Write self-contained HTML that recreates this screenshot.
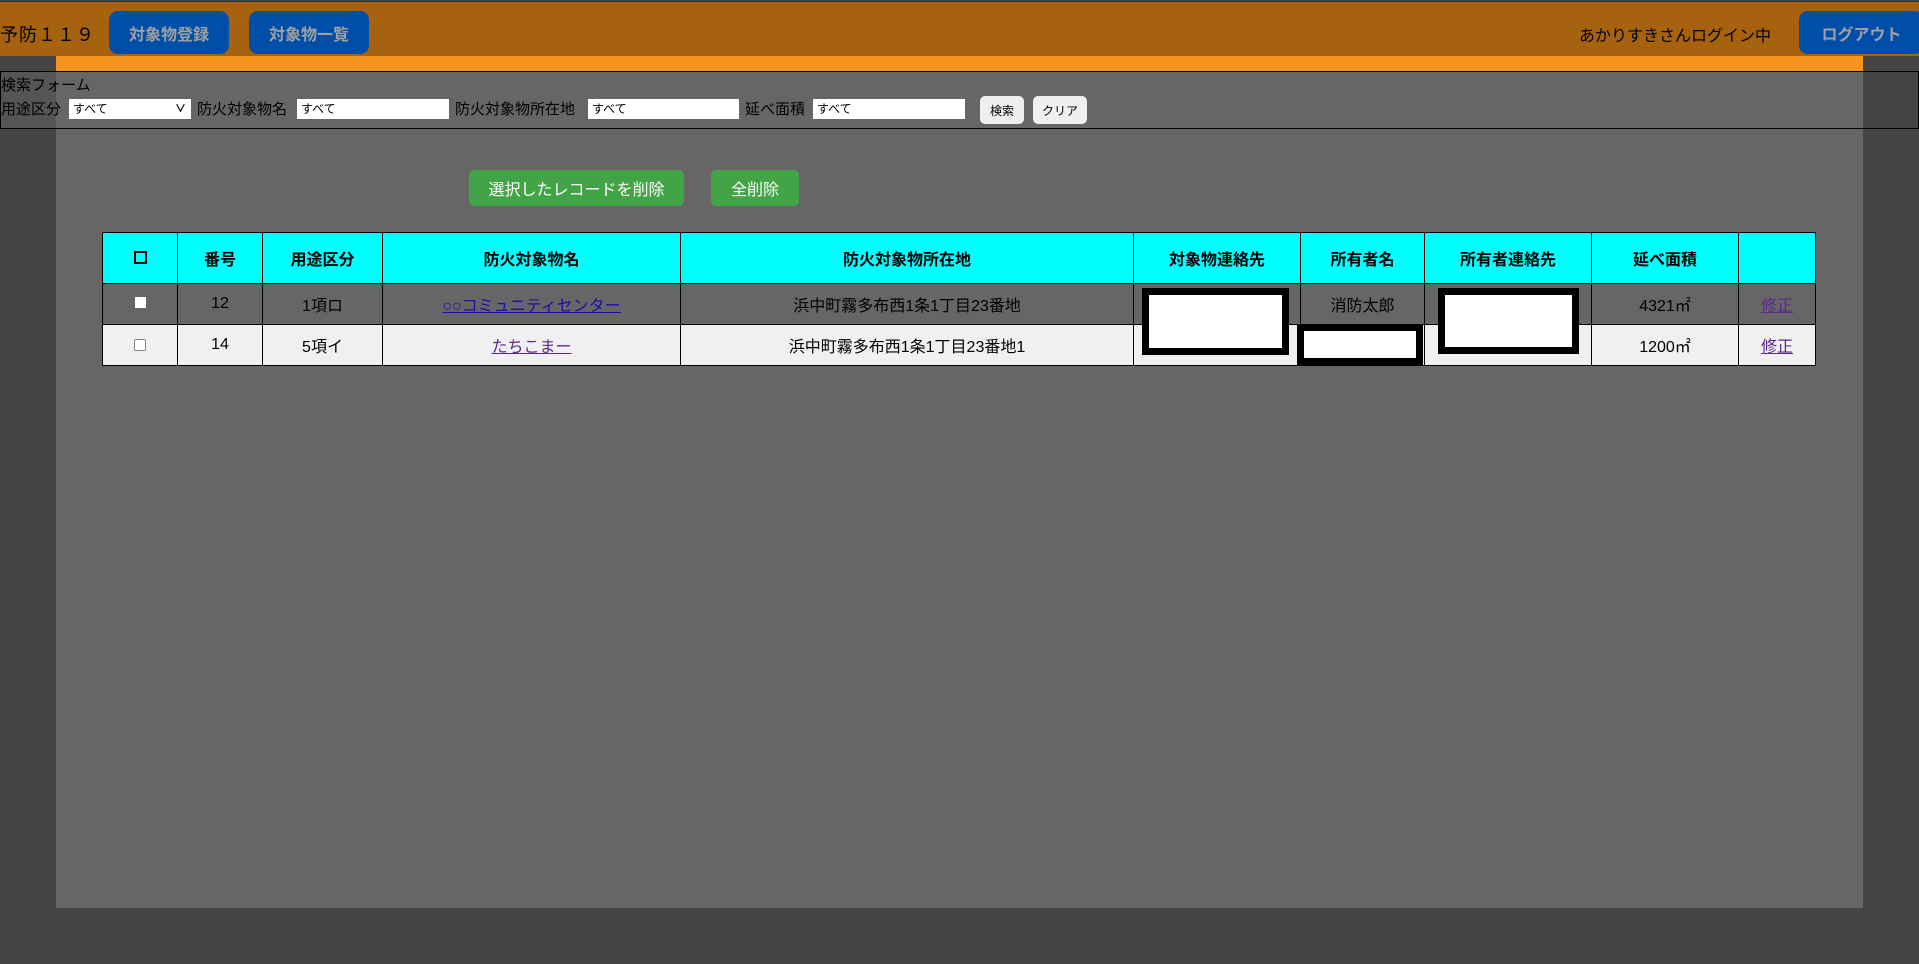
<!DOCTYPE html>
<html><head><meta charset="utf-8"><style>
*{margin:0;padding:0;box-sizing:border-box}
body{width:1919px;height:964px;background:#444;position:relative;overflow:hidden;font-family:"Liberation Sans","Noto Sans CJK JP",sans-serif;color:#000}
.abs{position:absolute}
#hdr{left:0;top:1px;width:1919px;height:55px;background:#a6620f;border-top:1px solid #333}
#inner{left:56px;top:56px;width:1807px;height:852px;background:#666}
#orange{left:56px;top:56px;width:1807px;height:15px;background:#f7941d}
.bb{background:#004ea8;color:#a0a0a0;font-weight:bold;font-size:16px;border-radius:9px;display:flex;align-items:center;justify-content:center;height:43px;top:11px}
#form{left:0;top:71px;width:1919px;height:58px;border:1px solid #000;font-size:15px}
#form .l{position:absolute;white-space:nowrap}
.inp{position:absolute;background:#fff;height:20px;top:27px;font-size:12px;padding-left:4px;line-height:20px}
.btn{position:absolute;background:#efefef;border-radius:5px;font-size:12px;display:flex;align-items:center;justify-content:center;top:24px;height:28px}
.gb{background:#43a447;color:#fff;font-size:16px;border-radius:5px;display:flex;align-items:center;justify-content:center;top:170px;height:36px}
table{position:absolute;left:102px;top:232px;border-collapse:collapse;font-size:16px;table-layout:fixed}
td,th{border:1px solid #000;text-align:center}
th{background:#0ff;height:51px;font-size:16px}
td{height:41px}
tr.r2 td{background:#f0f0f0}
a{color:#1a0dab}
a.v{color:#5a2a8a}
.red{position:absolute;background:#fff;border:7px solid #000}
</style></head><body>
<div class="abs" id="hdr"></div>
<div class="abs" style="left:0;top:21px;font-size:18px;letter-spacing:1px">予防１１９</div>
<div class="abs bb" style="left:109px;width:120px">対象物登録</div>
<div class="abs bb" style="left:249px;width:120px">対象物一覧</div>
<div class="abs" style="left:1579px;top:22px;font-size:16px">あかりすきさんログイン中</div>
<div class="abs bb" style="left:1799px;width:125px">ログアウト</div>
<div class="abs" id="inner"></div>
<div class="abs" id="orange"></div>
<div class="abs" style="left:0;top:71px;width:56px;height:58px;background:#555"></div>
<div class="abs" style="left:1863px;top:71px;width:56px;height:58px;background:#444"></div>
<div class="abs" id="form">
 <div class="l" style="left:0;top:2px">検索フォーム</div>
 <div class="l" style="left:0;top:26px">用途区分</div>
 <div class="inp" style="left:68px;width:122px">すべて<span style="position:absolute;right:5px;font-size:11px;font-weight:bold">&#8744;</span></div>
 <div class="l" style="left:196px;top:26px">防火対象物名</div>
 <div class="inp" style="left:296px;width:152px">すべて</div>
 <div class="l" style="left:454px;top:26px">防火対象物所在地</div>
 <div class="inp" style="left:587px;width:151px">すべて</div>
 <div class="l" style="left:744px;top:26px">延べ面積</div>
 <div class="inp" style="left:812px;width:152px">すべて</div>
 <div class="btn" style="left:979px;width:44px">検索</div>
 <div class="btn" style="left:1032px;width:54px">クリア</div>
</div>
<div class="abs gb" style="left:469px;width:215px">選択したレコードを削除</div>
<div class="abs gb" style="left:711px;width:88px">全削除</div>
<table>
<colgroup><col style="width:75px"><col style="width:85px"><col style="width:120px"><col style="width:298px"><col style="width:453px"><col style="width:167px"><col style="width:124px"><col style="width:167px"><col style="width:147px"><col style="width:77px"></colgroup>
<tr><th><span style="display:inline-block;width:13px;height:13px;border:2px solid #000;vertical-align:middle"></span></th><th>番号</th><th>用途区分</th><th>防火対象物名</th><th>防火対象物所在地</th><th>対象物連絡先</th><th>所有者名</th><th>所有者連絡先</th><th>延べ面積</th><th></th></tr>
<tr><td><span style="display:inline-block;width:11px;height:11px;background:#fff"></span></td><td>12</td><td>1項ロ</td><td><a href="#">○○コミュニティセンター</a></td><td>浜中町霧多布西1条1丁目23番地</td><td></td><td>消防太郎</td><td></td><td>4321㎡</td><td><a class="v" href="#">修正</a></td></tr>
<tr class="r2"><td><span style="display:inline-block;width:12px;height:12px;border:1px solid #888;border-radius:2px;background:#fff;vertical-align:middle"></span></td><td>14</td><td>5項イ</td><td><a class="v" href="#">たちこまー</a></td><td>浜中町霧多布西1条1丁目23番地1</td><td></td><td></td><td></td><td>1200㎡</td><td><a class="v" href="#">修正</a></td></tr>
</table>
<div class="red" style="left:1142px;top:288px;width:147px;height:67px"></div>
<div class="red" style="left:1297px;top:324px;width:126px;height:41px"></div>
<div class="red" style="left:1438px;top:288px;width:141px;height:66px"></div>
</body></html>
